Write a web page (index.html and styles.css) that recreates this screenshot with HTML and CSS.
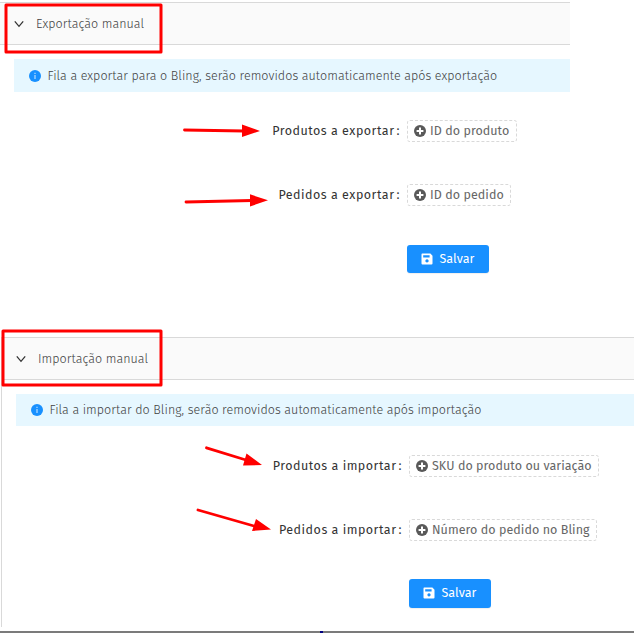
FILE: index.html
```html
<!DOCTYPE html>
<html lang="pt-BR">
<head>
<meta charset="utf-8">
<title>Bling</title>
<link rel="stylesheet" href="styles.css">
</head>
<body>
<svg class="defs" width="0" height="0">
  <symbol id="chevron" viewBox="0 0 10 8"><path d="M.8 1.3 5 6.3 9.2 1.3" fill="none" stroke="#333" stroke-width="1.3"/></symbol>
  <symbol id="info" viewBox="0 0 12 12"><circle cx="6" cy="6" r="6" fill="#1890ff"/><path d="M6 5.1v4M6 2.8v1.3" stroke="#a9d6ff" stroke-width="1.3"/></symbol>
  <symbol id="plus" viewBox="0 0 12 12"><circle cx="6" cy="6" r="6" fill="#595959"/><path d="M6 2.600v6.800M2.600 6h6.800" stroke="#fff" stroke-width="2"/></symbol>
  <symbol id="save" viewBox="0 0 12 12"><path fill="#fff" fill-rule="evenodd" d="M1.200.5h8.200L11.500 2.700V10.500a1 1 0 0 1-1 1H1.500a1 1 0 0 1-1-1V1.500a1 1 0 0 1 .7-1ZM2.200 2.200V4.600H8.600V2.200ZM6 6.300a1.600 1.600 0 1 0 .01 0Z"/></symbol>
</svg>
<main class="page">
  <section class="panel export">
    <header class="head"><svg class="chev"><use href="#chevron"/></svg><span class="title">Exportação manual</span></header>
    <div class="alert"><svg class="icon"><use href="#info"/></svg><span class="msg">Fila a exportar para o Bling, serão removidos automaticamente após exportação</span></div>
    <div class="row first"><span class="label">Produtos a exportar<i>:</i></span><span class="tag t1"><svg class="icon"><use href="#plus"/></svg><span>ID do produto</span></span></div>
    <div class="row"><span class="label">Pedidos a exportar<i>:</i></span><span class="tag t2"><svg class="icon"><use href="#plus"/></svg><span>ID do pedido</span></span></div>
    <button class="save"><svg class="icon"><use href="#save"/></svg><span>Salvar</span></button>
  </section>
  <section class="panel import">
    <header class="head"><svg class="chev"><use href="#chevron"/></svg><span class="title">Importação manual</span></header>
    <div class="alert"><svg class="icon"><use href="#info"/></svg><span class="msg">Fila a importar do Bling, serão removidos automaticamente após importação</span></div>
    <div class="row first"><span class="label">Produtos a importar<i>:</i></span><span class="tag t3"><svg class="icon"><use href="#plus"/></svg><span>SKU do produto ou variação</span></span></div>
    <div class="row"><span class="label">Pedidos a importar<i>:</i></span><span class="tag t4"><svg class="icon"><use href="#plus"/></svg><span>Número do pedido no Bling</span></span></div>
    <button class="save"><svg class="icon"><use href="#save"/></svg><span>Salvar</span></button>
  </section>
  <footer class="edge"><span class="handle"></span></footer>
</main>
<svg class="marks" viewBox="0 0 634 633">
  <g fill="none" stroke="#f00" stroke-linejoin="round">
    <rect x="6" y="5" width="155" height="47" stroke-width="3"/>
    <rect x="3" y="331" width="158" height="54" stroke-width="3"/>
    <path stroke-width="2.800" stroke-linecap="round" d="M184.500 130 244 131M186 202 252 200.500M206.500 447.800 246 460M198 510 254 526"/>
  </g>
  <path fill="#f00" d="M242 124.500 260 131 242 137ZM250 194.300 268 200.300 250 206.500ZM246.500 453.500 262 465 243 465.500ZM256 519 271 529.500 252 531Z"/>
</svg>
</body>
</html>
```
FILE: styles.css
```css
* { box-sizing: border-box; }
body { margin: 0; background: #fff; overflow: hidden; font: 12.5px/20px "Fira Sans", "Noto Sans", sans-serif; letter-spacing: 0.05px; color: #595959; }
.defs { position: absolute; }
.page { height: 633px; display: flex; flex-direction: column; padding-top: 2px; }
.panel { display: flex; flex-direction: column; align-items: flex-start; }
.export { width: 570px; height: 335px; }
.import { height: 290px; margin-left: 1px; border-left: 1px solid #d9d9d9; }
.head { width: 100%; height: 43px; flex: none; display: flex; align-items: center; padding-left: 14px; background: #fafafa; border: solid #d9d9d9; border-width: 1px 0; }
.chev { width: 10px; height: 8px; margin-right: 12px; }
.title { font-weight: 300; color: #404040; }
.icon { width: 12px; height: 12px; flex: none; display: block; }
.alert { width: calc(100% - 14px); height: 33px; flex: none; display: flex; align-items: center; gap: 6.5px; margin: 14px 0 0 14px; padding-left: 15px; background: #e6f7ff; white-space: nowrap; font-weight: 300; color: #404040; }
.import .alert { height: 32px; margin-bottom: 1px; }
.row { height: 22px; flex: none; display: flex; align-items: center; margin-top: 42px; white-space: nowrap; }
.row.first { margin-top: 28px; }
.label { width: 400px; color: #333; text-align: right; margin-right: 7px; letter-spacing: 0.5px; }
.label i { font-style: normal; margin-left: 2px; }
.tag { height: 22px; display: flex; align-items: center; gap: 4px; padding-left: 6px; border: 1px dashed #d9d9d9; border-radius: 3px; color: #666; }
.t1 { width: 110px; }
.t2 { width: 104px; }
.t3 { width: 190px; }
.t4 { width: 188px; }
.save { width: 82px; height: 28px; flex: none; display: flex; align-items: center; margin: 39px 0 0 407px; padding: 0 0 0 14px; gap: 6.5px; border: 0; border-radius: 3px; background: #1890ff; color: #fff; font: inherit; letter-spacing: 0.05px; box-shadow: 0 1px 1px #0001; }
.import .save { margin-top: 38px; height: 29px; padding-bottom: 1px; }
.edge { height: 2px; margin-top: 4px; background: #7b7b7b; display: flex; }
.handle { width: 3px; height: 2px; margin-left: 320px; background: #000080; }
.marks { position: absolute; left: 0; top: 0; width: 634px; height: 633px; pointer-events: none; }
```
